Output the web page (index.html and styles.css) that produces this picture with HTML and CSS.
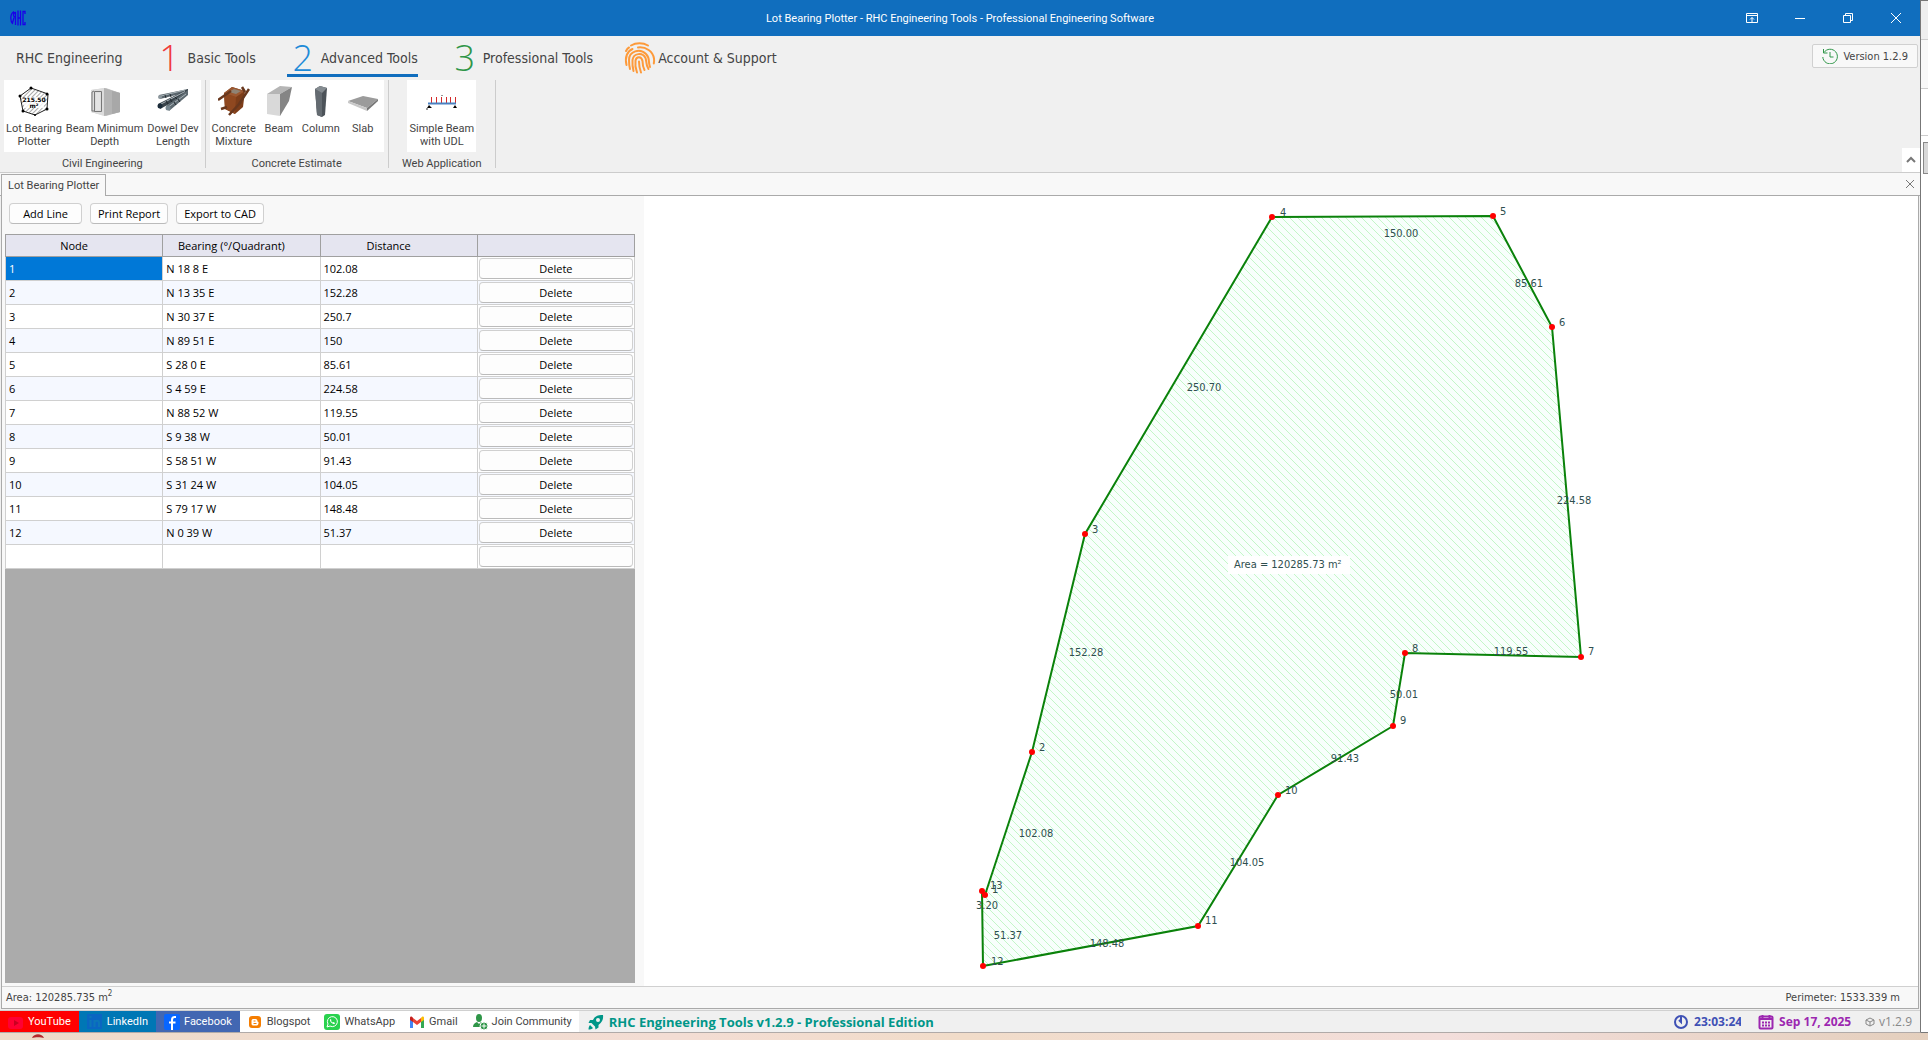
FILE: index.html
```html
<!DOCTYPE html>
<html lang="en">
<head>
    <meta charset="UTF-8">
    <meta name="viewport" content="width=device-width, initial-scale=1.0">
    <title>Lot Bearing Plotter - RHC Engineering Tools</title>
    <link rel="stylesheet" href="styles.css">
</head>
<body>
    <div class="desktop">
        <div class="window">
            <header class="titlebar">
                <svg class="app-logo" viewBox="0 0 16 16" width="16" height="16" fill="none" stroke="#1a00e8" stroke-width="1.3">
                    <path d="M4 1.500C1.500 3 .8 5 .8 8s1 5 2 6M5.500 15V2.500C3 2.500 2.500 7 5.500 7M4 7.500L2.500 13M8 .5v15M10.500 .5v15M8 8h2.500M15 4V1.500h-2v13h2V12"/>
                </svg>
                <h1>Lot Bearing Plotter - RHC Engineering Tools - Professional Engineering Software</h1>
                <div class="window-buttons">
                    <button aria-label="Ribbon display"><svg viewBox="0 0 12 12" width="12" height="12"><path d="M.5 1.500h11v9H.5zM.5 3.500h11M6 10V5.500M4 7.500l2-2 2 2"/></svg></button>
                    <button aria-label="Minimize"><svg viewBox="0 0 12 12" width="12" height="12"><path d="M1 6.500h10"/></svg></button>
                    <button aria-label="Restore"><svg viewBox="0 0 12 12" width="12" height="12"><path d="M1.500 3.500h7v7h-7zM3.500 3V1.500h7v7H9"/></svg></button>
                    <button aria-label="Close"><svg viewBox="0 0 12 12" width="12" height="12"><path d="M1 1l10 10M11 1L1 11"/></svg></button>
                </div>
            </header>

            <nav class="tabs">
                <a href="#" class="tab">RHC Engineering</a>
                <a href="#" class="tab"><span class="num red">1</span>Basic Tools</a>
                <a href="#" class="tab active"><span class="num blue">2</span>Advanced Tools</a>
                <a href="#" class="tab"><span class="num green">3</span>Professional Tools</a>
                <a href="#" class="tab">
                    <svg class="tab-icon" viewBox="0 0 32 32" width="32" height="32" fill="none" stroke="#fd9a3a" stroke-width="2" stroke-linecap="round">
                        <path d="M7 3.500c5-3 12-3 17 0M2 9c1-2 2-3 3-3.500M2.500 23c-2-8 1-14 6-16M14 5.500c8-1 15 4 16 11 .3 2 .2 3-.2 5M6 27c-1-4-1-6-1-9C5 9 16 6 22 12c2 2 3 5 3 8 0 2 .3 3 1 5M9.500 29c-1-4-1.300-7-1-11 1-7 10-8 13-2 1 2 0 6 3 11M13 30.500c-2-5-2-8-1.500-12 1-4.500 6-4.500 7 .5 0 3 1 7 2 9M17 30.500c-1.500-4-2-7-2-11"/>
                    </svg>Account &amp; Support</a>
                <button class="version">
                    <svg viewBox="0 0 16 16" width="16" height="16" fill="none" stroke="#2f9648" stroke-width="1"><path d="M1.500 1v4h4M2 4.500A7.300 7.300 0 1 1 .8 9M8 4v5h3.500"/></svg>
                    Version 1.2.9
                </button>
            </nav>

            <section class="ribbon">
                <div class="group">
                    <div class="tools">
                        <button class="tool">
                            <svg viewBox="0 0 32 32" width="32" height="32">
                                <defs><pattern id="lotHatch" width="3" height="3" patternUnits="userSpaceOnUse" patternTransform="rotate(45)"><path d="M0 0v3" stroke="#555" stroke-width="1"/></pattern></defs>
                                <path d="M13 3l17 6-1 15-12 6-12-4L2 11z" fill="url(#lotHatch)" stroke="#222" stroke-width="1"/>
                                <rect x="6" y="12" width="20" height="11" fill="#fff" opacity=".8"/>
                                <circle cx="13" cy="3" r="1.500"/><circle cx="29" cy="9" r="1.500"/><circle cx="29" cy="24" r="1.500"/><circle cx="17" cy="30" r="1"/><circle cx="5" cy="26" r="1.500"/><circle cx="2" cy="11" r="1.500"/>
                                <text x="16" y="17" class="icon-text">215.50</text><text x="16" y="23" class="icon-text">m²</text>
                            </svg>
                            Lot Bearing<br>Plotter
                        </button>
                        <button class="tool">
                            <svg viewBox="0 0 32 32" width="32" height="32">
                                <path d="M2 5l15-2 14 5v19l-14 4-15-4z" fill="#c9c9c9"/><path d="M15 3l16 5v19l-16 4z" fill="#b4b4b4"/><path d="M23 6l8 2v19l-8 2z" fill="#a8a8a8"/><path d="M2 5l13-2v28L2 27z" fill="#dcdcdc"/>
                                <path d="M5.500 6.500h7v20h-7zM3 7l2-1M3 26h3M3 7v19" fill="none" stroke="#777" stroke-width="1"/><path d="M7 8h4v17H7z" fill="#e4e4e4"/>
                            </svg>
                            Beam Minimum<br>Depth
                        </button>
                        <button class="tool">
                            <svg viewBox="0 0 32 32" width="32" height="32">
                                <path d="M2 10L31 4v3L3 14z" fill="#59646b"/><path d="M1 19L31 4v5L3 24z" fill="#3b454c"/><path d="M9 21L31 5v5L12 26z" fill="#5d6970"/>
                                <path d="M4 11l24-6M4 19L28 6.500M12 21.500L29 9" fill="none" stroke="#aab4b9" stroke-width="1"/>
                                <path d="M8 10l1 3M13 9l1 3M18 12l2 2M13 14l2 3M9 16l2 3M17 17l2 3M21 14l2 3" stroke="#22292e" stroke-width="1"/>
                                <circle cx="3" cy="12" r="2" fill="#8d989e"/><circle cx="3" cy="21" r="2.500" fill="#1b2c3a"/><circle cx="11" cy="23" r="2.500" fill="#778790"/>
                            </svg>
                            Dowel Dev<br>Length
                        </button>
                    </div>
                    <p class="caption">Civil Engineering</p>
                </div>
                <div class="group">
                    <div class="tools">
                        <button class="tool">
                            <svg viewBox="0 0 32 32" width="32" height="32">
                                <path d="M6 8l8-6 13 4-2 16-8 7-10-5z" fill="#7d3d19"/><path d="M6 8l12 4-1 17-10-5z" fill="#8f4820"/><path d="M6 8l8-6 13 4-9 6z" fill="#9b5730"/><path d="M11 7l5-3 7 2-5 3z" fill="#8f8375"/>
                                <path d="M0 15l13-9M31 4L21 19M23 17L11 30M3 24l6-2M24 2l3 5" stroke="#68371d" stroke-width="2.500"/>
                            </svg>
                            Concrete<br>Mixture
                        </button>
                        <button class="tool">
                            <svg viewBox="0 0 32 32" width="32" height="32"><path d="M4 9L17 1l12 1-12 7z" fill="#b5b5b5"/><path d="M17 9L29 2l-3 14-9 15z" fill="#858585"/><path d="M4 9h13v22L4 29z" fill="#d9d9d9"/></svg>
                            Beam
                        </button>
                        <button class="tool">
                            <svg viewBox="0 0 32 32" width="32" height="32"><path d="M10 4l5-3 7 2-2 27-3 2-5-2z" fill="#4c5359"/><path d="M10 4l7 4v24l-5-2z" fill="#646b71"/><path d="M10 4l5-3 7 2-5 5z" fill="#858c91"/></svg>
                            Column
                        </button>
                        <button class="tool">
                            <svg viewBox="0 0 32 32" width="32" height="32"><path d="M1 16l15-5 15 3-11 9z" fill="#9b9b9b"/><path d="M1 16l19 7v3L1 18z" fill="#c8c8c8"/><path d="M20 23l11-9v2l-11 10z" fill="#777"/></svg>
                            Slab
                        </button>
                    </div>
                    <p class="caption">Concrete Estimate</p>
                </div>
                <div class="group web">
                    <div class="tools">
                        <button class="tool">
                            <svg viewBox="0 0 32 32" width="32" height="32"><path d="M5.500 18v-6M10.500 18v-6M15.500 18v-6M20.500 18v-6M24.500 18v-6M29.500 18v-6" stroke="#d32b2b"/><path d="M2 18.500h28" stroke="#4a80c0" stroke-width="2"/><path d="M3 20l-2 3h5zM29 20l-2 3h4z"/><path d="M0 24h2M16 11v-1" stroke="#333"/></svg>
                            Simple Beam<br>with UDL
                        </button>
                    </div>
                    <p class="caption">Web Application</p>
                </div>
                <button class="collapse" aria-label="Collapse ribbon"><svg viewBox="0 0 10 10" width="10" height="10"><path d="M1 7l4-4 4 4"/></svg></button>
            </section>

            <div class="doc-tabs">
                <a href="#" class="doc-tab">Lot Bearing Plotter</a>
                <button class="doc-close" aria-label="Close tab"><svg viewBox="0 0 10 10" width="10" height="10"><path d="M1 1l8 8M9 1L1 9"/></svg></button>
            </div>

            <main class="document">
                <div class="content">
                    <section class="lines">
                        <div class="actions">
                            <button>Add Line</button>
                            <button>Print Report</button>
                            <button>Export to CAD</button>
                        </div>
                        <div class="grid">
                            <table>
                                <thead>
                                    <tr><th>Node</th><th>Bearing (°/Quadrant)</th><th>Distance</th><th></th></tr>
                                </thead>
                                <tbody>
                                    <tr><td class="selected">1</td><td>N 18 8 E</td><td>102.08</td><td><button>Delete</button></td></tr>
                                    <tr><td>2</td><td>N 13 35 E</td><td>152.28</td><td><button>Delete</button></td></tr>
                                    <tr><td>3</td><td>N 30 37 E</td><td>250.7</td><td><button>Delete</button></td></tr>
                                    <tr><td>4</td><td>N 89 51 E</td><td>150</td><td><button>Delete</button></td></tr>
                                    <tr><td>5</td><td>S 28 0 E</td><td>85.61</td><td><button>Delete</button></td></tr>
                                    <tr><td>6</td><td>S 4 59 E</td><td>224.58</td><td><button>Delete</button></td></tr>
                                    <tr><td>7</td><td>N 88 52 W</td><td>119.55</td><td><button>Delete</button></td></tr>
                                    <tr><td>8</td><td>S 9 38 W</td><td>50.01</td><td><button>Delete</button></td></tr>
                                    <tr><td>9</td><td>S 58 51 W</td><td>91.43</td><td><button>Delete</button></td></tr>
                                    <tr><td>10</td><td>S 31 24 W</td><td>104.05</td><td><button>Delete</button></td></tr>
                                    <tr><td>11</td><td>S 79 17 W</td><td>148.48</td><td><button>Delete</button></td></tr>
                                    <tr><td>12</td><td>N 0 39 W</td><td>51.37</td><td><button>Delete</button></td></tr>
                                    <tr><td></td><td></td><td></td><td><button aria-label="New row"></button></td></tr>
                                </tbody>
                            </table>
                        </div>
                    </section>

                    <section class="plot">
                        <svg viewBox="0 0 1274 790" role="img" aria-label="Lot plot">
                            <defs>
                                <pattern id="hatch" width="8" height="8" patternUnits="userSpaceOnUse">
                                    <path d="M-1 -1L9 9M-1 7l2 2M7 -1l2 2" stroke="#c4f6c8" stroke-width="1"/>
                                </pattern>
                            </defs>
                            <g class="lot">
                                <polygon fill="#f8fffc" points="341,699 388,556 441,338 628,21 849,20 908,131 937,461 761,457 749,530 634,599 554,730 339,770 338,695"/>
                                <polygon fill="url(#hatch)" points="341,699 388,556 441,338 628,21 849,20 908,131 937,461 761,457 749,530 634,599 554,730 339,770 338,695"/>
                                <polygon class="outline" points="341,699 388,556 441,338 628,21 849,20 908,131 937,461 761,457 749,530 634,599 554,730 339,770 338,695"/>
                            </g>
                            <g class="nodes">
                                <circle cx="341" cy="699" r="3"/><circle cx="388" cy="556" r="3"/><circle cx="441" cy="338" r="3"/>
                                <circle cx="628" cy="21" r="3"/><circle cx="849" cy="20" r="3"/><circle cx="908" cy="131" r="3"/>
                                <circle cx="937" cy="461" r="3"/><circle cx="761" cy="457" r="3"/><circle cx="749" cy="530" r="3"/>
                                <circle cx="634" cy="599" r="3"/><circle cx="554" cy="730" r="3"/><circle cx="339" cy="770" r="3"/>
                                <circle cx="338" cy="695" r="3"/>
                            </g>
                            <g class="node-labels">
                                <text x="348" y="697">1</text><text x="395" y="555">2</text><text x="448" y="337">3</text>
                                <text x="636" y="20">4</text><text x="856" y="19">5</text><text x="915" y="130">6</text>
                                <text x="944" y="459">7</text><text x="768" y="456">8</text><text x="756" y="528">9</text>
                                <text x="641" y="598">10</text><text x="561" y="728">11</text><text x="347" y="769">12</text>
                                <text x="346" y="693">13</text>
                            </g>
                            <g class="distances">
                                <text x="392" y="641">102.08</text><text x="442" y="460">152.28</text><text x="560" y="195">250.70</text>
                                <text x="757" y="41">150.00</text><text x="885" y="91">85.61</text><text x="930" y="308">224.58</text>
                                <text x="867" y="459">119.55</text><text x="760" y="502">50.01</text><text x="701" y="566">91.43</text>
                                <text x="603" y="670">104.05</text><text x="463" y="751">148.48</text><text x="364" y="743">51.37</text>
                                <text x="343" y="713">3.20</text>
                            </g>
                            <rect x="584" y="360" width="122" height="18" fill="#fff"/>
                            <text class="area" x="590" y="372">Area = 120285.73 m²</text>
                        </svg>
                    </section>
                </div>
                <div class="status">
                    <span>Area: 120285.735 m<sup>2</sup></span>
                    <span>Perimeter: 1533.339 m</span>
                </div>
            </main>

            <footer class="footer">
                <a href="#" class="link youtube"><svg viewBox="0 0 16 16" width="16" height="16"><rect y="3" width="15" height="12" rx="3" fill="#ff0033"/><path d="M6 6l5 3-5 3z" fill="#c90021"/></svg>YouTube</a>
                <a href="#" class="link linkedin"><svg viewBox="0 0 16 16" width="16" height="16"><rect width="15" height="15" fill="#0a66c2"/><path d="M3.500 6v7M3.500 2v2M7.500 13V6M7.500 9c0-3 4.500-3 4.500 0v4" fill="none" stroke="#0c76b8" stroke-width="2"/></svg>LinkedIn</a>
                <a href="#" class="link facebook"><svg viewBox="0 0 16 16" width="16" height="16"><rect width="16" height="16" rx="2" fill="#0866ff"/><path d="M12 3h-1.500C8.500 3 8 4 8 6v10M5 8.500h6.500" fill="none" stroke="#fff" stroke-width="2"/></svg>Facebook</a>
                <a href="#" class="link"><svg viewBox="0 0 16 16" width="16" height="16"><rect x="2" y="2" width="12" height="12" rx="3" fill="#f57d00"/><path d="M6 5h2.500c1.500 0 2 1 2 2.500l1 .5v1c0 2-1 2.500-2.500 2.500H6c-1 0-1.500-1-1.500-2V7C4.500 6 5 5 6 5z" fill="#fff"/><path d="M6.500 7h2M6.500 9.500h3" stroke="#f57d00"/></svg>Blogspot</a>
                <a href="#" class="link"><svg viewBox="0 0 16 16" width="16" height="16"><rect width="16" height="16" rx="3" fill="#29d24e"/><path d="M3 13l1-3a5 5 0 1 1 2 2z" fill="none" stroke="#fff"/><path d="M6 5.500c-.5 2 2.500 5 4.500 4.500l.5-1-1.500-1-1 .5-1.500-1.500.5-1-1-1z" fill="#fff"/></svg>WhatsApp</a>
                <a href="#" class="link"><svg viewBox="0 0 16 16" width="16" height="16"><path d="M1 4v10h3V7z" fill="#4285f4"/><path d="M15 4v10h-3V7z" fill="#34a853"/><path d="M4 4l4 3 4-3v4l-4 3-4-3z" fill="#ea4335"/><path d="M1 4c0-2 2-2 3 0v4L1 6z" fill="#c5221f"/><path d="M15 4c0-2-2-2-3 0v4l3-2z" fill="#fbbc04"/></svg>Gmail</a>
                <a href="#" class="link"><svg viewBox="0 0 16 16" width="16" height="16" fill="#2f9648"><ellipse cx="7" cy="4" rx="3" ry="4"/><path d="M1 13c0-3 2-4 4-5l2 2 2-2 2 1-3 4z"/><circle cx="12" cy="12" r="4" stroke="#fff"/><path d="M12 9.500v5M9.500 12h5" stroke="#fff"/></svg>Join Community</a>
                <div class="product">
                    <svg viewBox="0 0 16 16" width="16" height="16" fill="#009688"><path d="M15 1c-5-.5-8 1-10 5L2 6 .5 9l3 0 3.500 3.500.5 3 3-2V11c4-3 5-6 4.500-10zM10 4a2 2 0 1 1 0 4 2 2 0 0 1 0-4zM2 11c-1 1-1.500 3-1.500 4.500C2 15.500 4 15 5 14z" fill-rule="evenodd"/></svg>
                    RHC Engineering Tools v1.2.9 - Professional Edition
                </div>
                <div class="clock">
                    <svg viewBox="0 0 16 16" width="16" height="16" fill="none" stroke="#3f51b5" stroke-width="2"><circle cx="8" cy="8" r="6"/><path d="M8 3v5l-2-2"/></svg>
                    <span class="time">23:03:24</span>
                </div>
                <div class="calendar">
                    <svg viewBox="0 0 16 16" width="16" height="16" fill="none" stroke="#9c27b0" stroke-width="2"><rect x="1.500" y="2.500" width="13" height="12" rx="1"/><path d="M2 5h12M4.500 1v3M11.500 1v3"/><path d="M4 8.500h8M4 11.500h8" stroke-dasharray="2 1"/></svg>
                    <span class="date">Sep 17, 2025</span>
                </div>
                <div class="build">
                    <svg viewBox="0 0 10 10" width="10" height="10" fill="none" stroke="#888"><path d="M5 1l4 2v4L5 9 1 7V3zM1 3l4 2 4-2M5 5v4"/></svg>
                    v1.2.9
                </div>
            </footer>
        </div>

        <!-- window behind the main one -->
        <aside class="behind">
            <div class="behind-title"></div>
            <div class="behind-bar"></div>
            <div class="behind-row"></div>
            <div class="behind-scroll"></div>
        </aside>
    </div>
    <div class="wallpaper">
        <svg viewBox="0 0 12 7" width="12" height="7"><path d="M0 5c2-5 10-5 12 0-3-1-9-1-12 0z" fill="#b3282d"/></svg>
    </div>
</body>
</html>
```

FILE: styles.css
```css
* {
    box-sizing: border-box;
}

body {
    margin: 0;
    height: 100vh;
    display: flex;
    flex-direction: column;
    font-family: Roboto, "Open Sans", sans-serif;
    font-size: 11px;
    color: #444;
    background: #f0f0f0;
    overflow: hidden;
}

button {
    font: inherit;
    color: inherit;
    border: none;
    background: none;
    padding: 0;
}

a {
    color: inherit;
    text-decoration: none;
}

svg {
    display: block;
    flex: none;
}

.desktop {
    flex: 1;
    display: flex;
    min-height: 0;
}

.window {
    flex: 1;
    min-width: 0;
    display: flex;
    flex-direction: column;
    border-right: 1px solid #777;
    border-bottom: 1px solid #b0aaa8;
}

/* title bar */
.titlebar {
    height: 36px;
    display: grid;
    grid-template-columns: 1fr auto 1fr;
    align-items: center;
    background: #106ebe;
    color: #fff;
}

.titlebar h1 {
    margin: 0;
    font-size: 11px;
    font-weight: normal;
}

.app-logo {
    margin-left: 10px;
}

.window-buttons {
    display: flex;
    justify-content: flex-end;
}

.window-buttons button {
    width: 48px;
    height: 36px;
    display: flex;
    align-items: center;
    justify-content: center;
}

.window-buttons svg {
    fill: none;
    stroke: #fff;
}

/* ribbon tabs */
.tabs {
    height: 44px;
    display: flex;
    gap: 31px;
    padding: 0 2px 0 16px;
    font-family: "DejaVu Sans Condensed", sans-serif;
    font-size: 14px;
}

.tab {
    height: 41px;
    display: flex;
    align-items: center;
    gap: 2px;
    padding-top: 5px;
    border-bottom: 3px solid transparent;
    white-space: nowrap;
}

.tab.active {
    border-color: #106ebe;
}

.num {
    width: 32px;
    font-family: "Open Sans", sans-serif;
    font-size: 36px;
    font-weight: 300;
    line-height: 36px;
    text-align: center;
}

.red {
    color: #f03a3a;
}

.blue {
    color: #1e8bd8;
}

.green {
    color: #2f9648;
}

.version {
    height: 24px;
    margin: 8px 0 0 auto;
    padding: 0 9px;
    display: flex;
    align-items: center;
    gap: 5px;
    font-size: 11px;
    background: #f8f8f8;
    border: 1px solid #d0d0d0;
    border-radius: 2px;
}

/* ribbon */
.ribbon {
    height: 93px;
    display: flex;
    border-bottom: 1px solid #ccc;
}

.group {
    height: 88px;
    padding: 0 4px;
    display: flex;
    flex-direction: column;
    align-items: center;
    border-right: 1px solid #ccc;
}

.group.web {
    width: 107px;
}

.tools {
    flex: none;
    display: flex;
    height: 72px;
    background: #fff;
}

.tool {
    min-width: 42px;
    padding: 5px 2px 0;
    line-height: 13px;
    display: block;
    align-self: flex-start;
}

.tool svg {
    margin: 0 auto 5px;
}

.icon-text {
    font-family: "DejaVu Sans", sans-serif;
    font-size: 6px;
    font-weight: bold;
    text-anchor: middle;
}

.caption {
    margin: 5px 0 0;
    line-height: 14px;
}

.collapse {
    width: 18px;
    height: 24px;
    margin: auto 0 0 auto;
    padding-left: 4px;
    background: #fff;
}

.collapse svg,
.doc-close svg {
    fill: none;
    stroke: #777;
    stroke-width: 2;
}

/* document tabs */
.doc-tabs {
    height: 23px;
    display: flex;
    align-items: flex-end;
    justify-content: space-between;
    padding: 0 5px 0 1px;
    background: #f8f8f8;
    border-bottom: 1px solid #aaa;
}

.doc-tab {
    height: 22px;
    margin-bottom: -1px;
    padding: 0 6px;
    line-height: 21px;
    background: #f8f8f8;
    border: 1px solid #aaa;
    border-bottom: none;
}

.doc-close {
    height: 23px;
}

.doc-close svg {
    stroke-width: 1;
}

.document {
    flex: 1;
    min-height: 0;
    margin: 0 1px 1px;
    display: flex;
    flex-direction: column;
    background: #f8f8f8;
    border: 1px solid #aaa;
    border-top: none;
}

.content {
    flex: 1;
    min-height: 0;
    display: flex;
}

/* bearing list */
.lines {
    flex: 0 0 642px;
    display: flex;
    flex-direction: column;
    padding: 7px 9px 3px 3px;
    font-family: "Open Sans", sans-serif;
    color: #000;
}

.actions {
    display: flex;
    gap: 8px;
    padding: 0 4px 10px;
}

.lines button {
    height: 21px;
    background: #fdfdfd;
    border: 1px solid #d0d0d0;
    border-bottom-color: #bbb;
    border-radius: 4px;
}

.actions button {
    min-width: 73px;
    padding: 0 7px;
}

.grid {
    flex: 1;
    background: #ababab;
}

table {
    width: 100%;
    table-layout: fixed;
    border-collapse: collapse;
}

th {
    height: 22px;
    padding: 0 20px 0 0;
    font-weight: normal;
    background: #e5e5f0;
    border: 1px solid #a0a0a0;
}

td {
    height: 24px;
    padding: 0 3px;
    background: #fff;
    border: 1px solid #d0d0d0;
}

tr:nth-child(even) td {
    background: #f5f8ff;
}

td.selected {
    color: #fff;
    background: #0078d7;
}

td:last-child {
    padding: 0 1px;
}

td button {
    display: block;
    width: 100%;
}

/* plot */
.plot {
    flex: 1;
    min-width: 0;
    background: #fff;
}

.plot svg {
    width: 100%;
    height: 100%;
}

.outline {
    fill: none;
    stroke: #0a820a;
    stroke-width: 2;
}

.nodes {
    fill: #f00;
}

.plot text {
    font-family: "DejaVu Sans Condensed", sans-serif;
    font-size: 11px;
    fill: #2f4f4f;
}

.distances {
    text-anchor: middle;
}

.status {
    height: 22px;
    display: flex;
    justify-content: space-between;
    align-items: center;
    padding: 0 18px 0 4px;
    font-family: "DejaVu Sans Condensed", sans-serif;
    border-top: 1px solid #d0d0d0;
}

sup {
    font-size: 8px;
    line-height: 0;
}

/* footer */
.footer {
    height: 22px;
    display: flex;
    align-items: center;
    border-top: 1px solid #d0d0d0;
    white-space: nowrap;
}

.link {
    height: 21px;
    display: flex;
    align-items: center;
    gap: 4px;
    padding: 0 7px;
    background: #fff;
}

.youtube,
.linkedin,
.facebook {
    padding: 0 8px;
    color: #fff;
}

.youtube {
    background: #f00;
}

.linkedin {
    background: #0077b5;
}

.facebook {
    background: #4267b2;
}

.product,
.clock,
.calendar,
.build {
    display: flex;
    align-items: center;
    gap: 5px;
    font-family: "Open Sans", sans-serif;
    font-size: 12px;
    font-weight: bold;
}

.product {
    flex: 1;
    padding-left: 9px;
    font-size: 13px;
    color: #009688;
}

.clock {
    color: #3f51b5;
}

.calendar {
    margin-left: 17px;
    color: #9c27b0;
}

.time {
    width: 47px;
    overflow: hidden;
}

.date {
    width: 72px;
    overflow: hidden;
}

.build {
    margin: 0 8px 0 14px;
    gap: 4px;
    font-weight: normal;
    color: #888;
}

/* edge of the window behind */
.behind {
    width: 7px;
    background: #fff;
    border-top: 1px solid #777;
    border-bottom: 1px solid #777;
}

.behind-title {
    height: 39px;
    background: #eee;
    border-bottom: 1px solid #ccc;
}

.behind-bar {
    height: 49px;
    background: #f8f8f8;
    border-bottom: 1px solid #ccc;
}

.behind-row {
    height: 47px;
    border-bottom: 1px solid #ccc;
}

.behind-scroll {
    height: 32px;
    margin: 6px 0 0 2px;
    background: #d8d8d8;
    border: 1px solid #888;
    border-right: none;
}

.wallpaper {
    height: 7px;
    padding-left: 32px;
    background: linear-gradient(90deg, #eedbc9, #f3ddd4 35%, #f1dcc9 50%, #f3dedb 75%, #e4cfbd);
}
```
